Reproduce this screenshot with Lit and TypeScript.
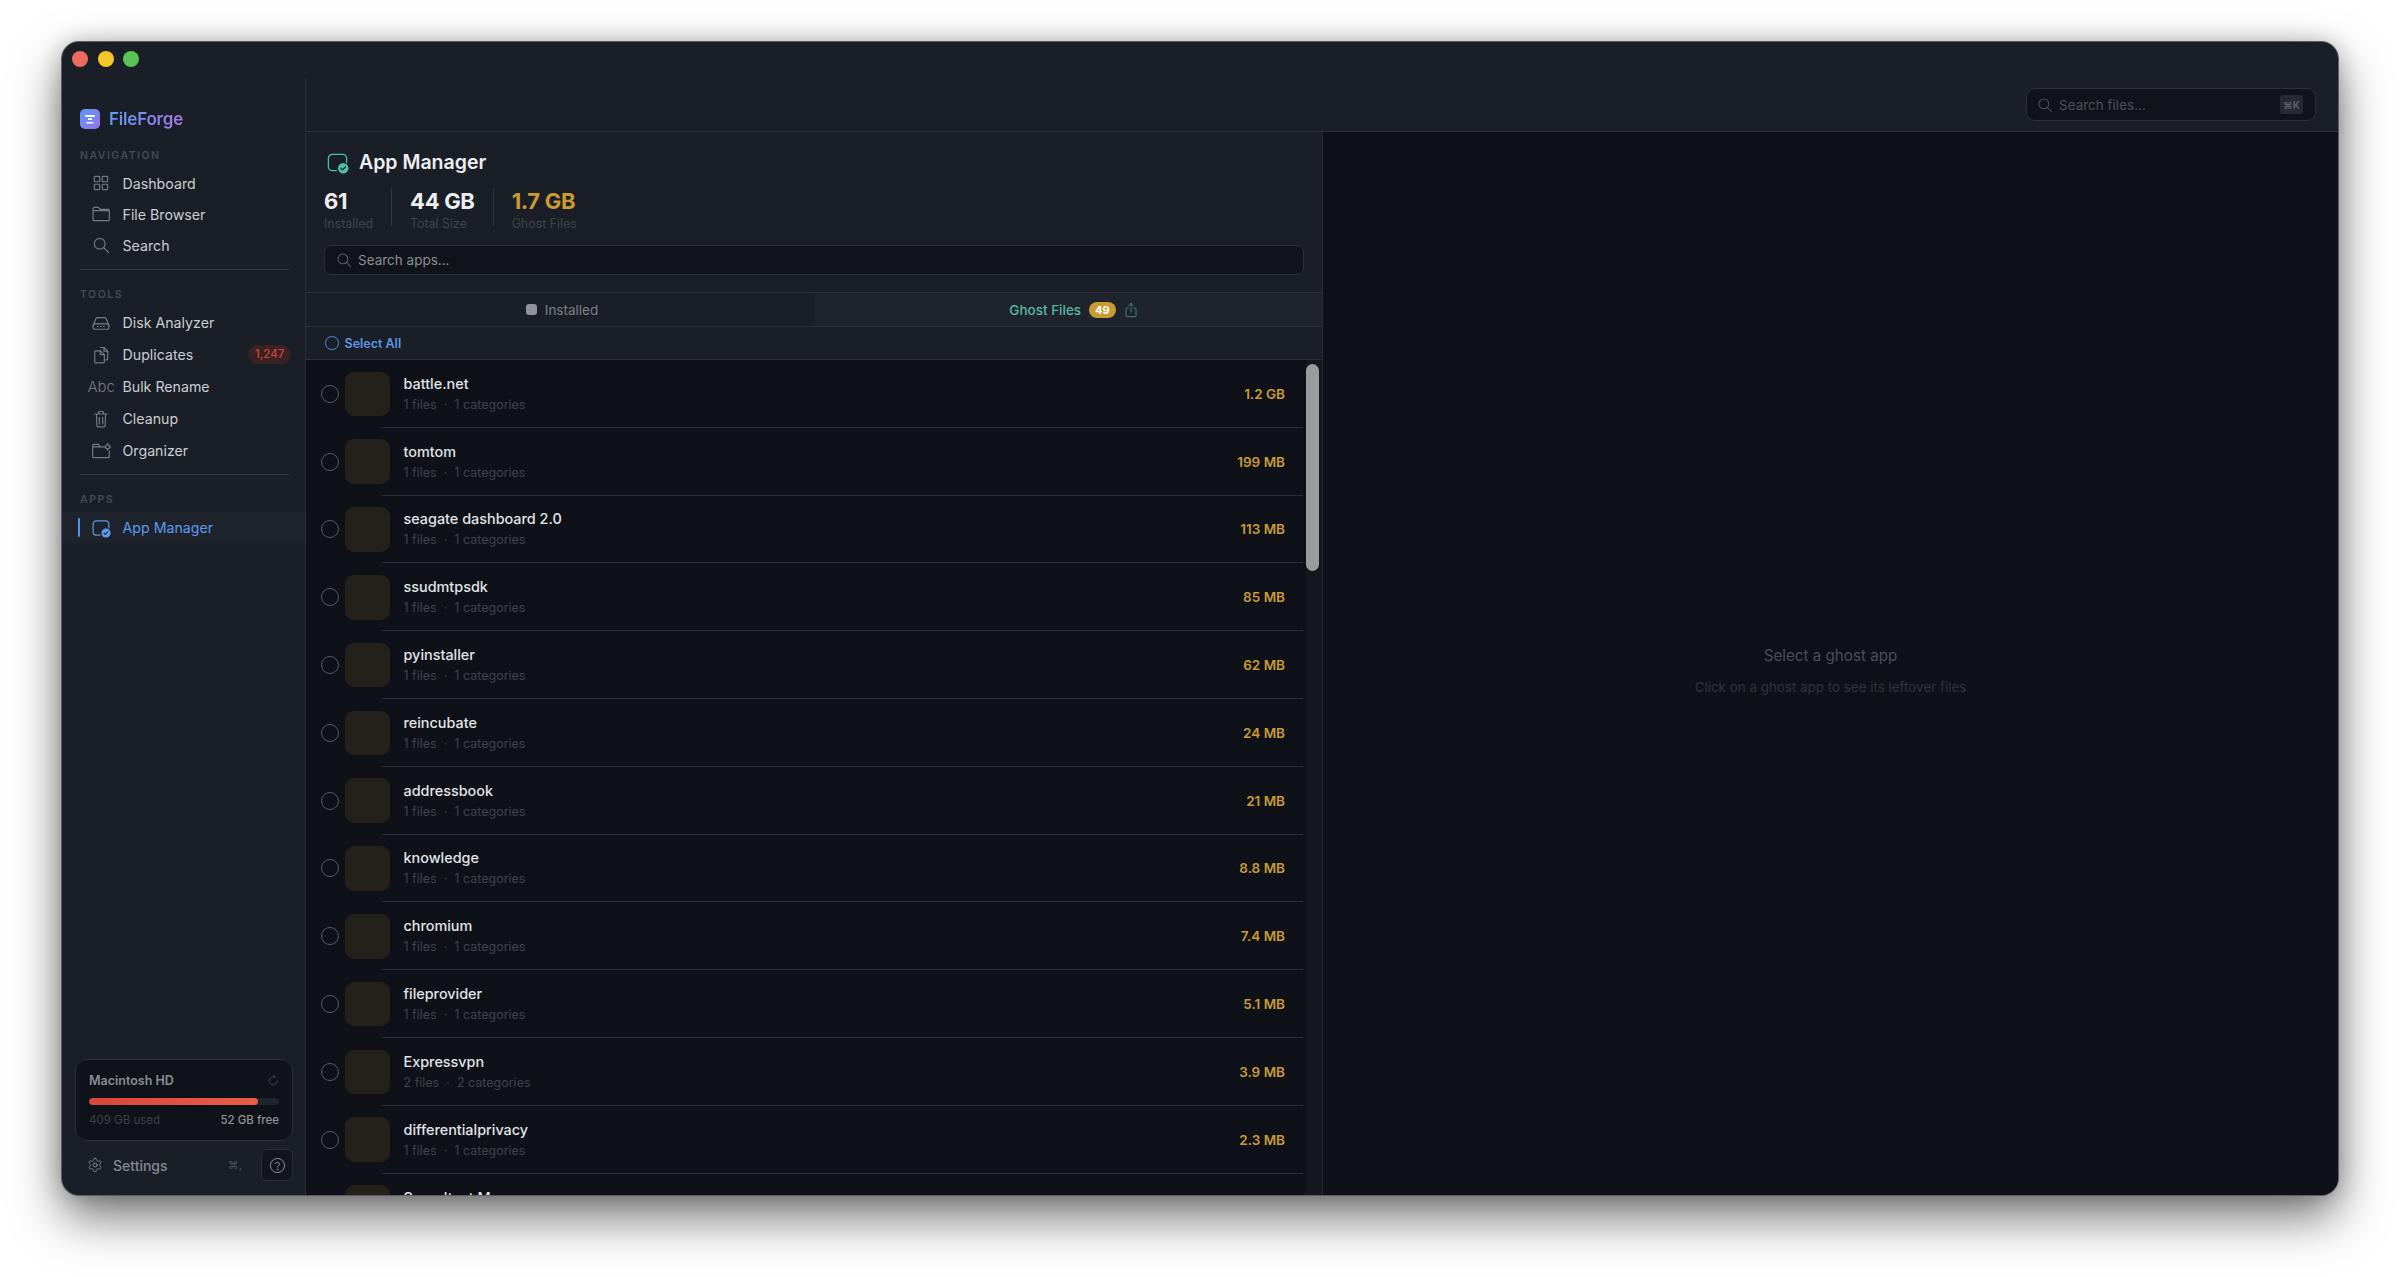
import { LitElement, html, css, svg } from "lit";
import { customElement } from "lit/decorators.js";

const ic = (body: unknown, size = 20, vb = 24) => html`<svg width=${size} height=${size} viewBox="0 0 ${vb} ${vb}" fill="none" stroke="currentColor" stroke-width="1.4" stroke-linecap="round" stroke-linejoin="round">${body}</svg>`;

const icons = {
  grid: svg`<rect x="4" y="4" width="6.5" height="6.5" rx="1"/><rect x="13.5" y="4" width="6.5" height="6.5" rx="1"/><rect x="4" y="13.5" width="6.5" height="6.5" rx="1"/><rect x="13.5" y="13.5" width="6.5" height="6.5" rx="1"/>`,
  folder: svg`<path d="M2.500 8V5.500A1.500 1.500 0 0 1 4 4h5l2 2.500h9.500A1.500 1.500 0 0 1 22 8v10.500a1.500 1.500 0 0 1-1.500 1.500H4a1.500 1.500 0 0 1-1.500-1.500V8H22"/>`,
  search: svg`<circle cx="10.500" cy="10.500" r="6.500"/><path d="M15.500 15.500L21 21"/>`,
  disk: svg`<path d="M2.500 15L6 6.500A2 2 0 0 1 7.800 5.500H16.200A2 2 0 0 1 18 6.500L21.500 15"/><rect x="2.500" y="13" width="19" height="6.500" rx="2.500"/><path d="M8 16.200h1M11.500 16.200h1M15 16.200h1"/>`,
  dup: svg`<path d="M11 3h4.500L20 7.500v9a1.500 1.500 0 0 1-1.500 1.500H16"/><path d="M15.500 3v4.500H20"/><path d="M5.500 7h6L16 11.500v9a1 1 0 0 1-1 1H5.500a1 1 0 0 1-1-1V8a1 1 0 0 1 1-1z"/><path d="M11 7v4.500h5"/>`,
  trash: svg`<path d="M4.500 6h15M9 6V4a1 1 0 0 1 1-1h4a1 1 0 0 1 1 1v2M6.500 6l.6 14a1.500 1.500 0 0 0 1.500 1.500h6.800a1.500 1.500 0 0 0 1.500-1.500l.6-14M10 10v8M14 10v8"/>`,
  org: svg`<path d="M2 7V5.500A1.500 1.500 0 0 1 3.500 4H9l2 3h4M22 12v6.500a1.500 1.500 0 0 1-1.500 1.500h-17A1.500 1.500 0 0 1 2 18.500V7h12"/><circle cx="20" cy="7" r="2.500"/><path d="M20 2.800v1.400M20 9.800v1.400M15.800 7h1.400M22.800 7h1.400"/>`,
  refresh: svg`<path d="M19 12.500A7.500 7.500 0 1 1 12 5h2.500"/><path d="M12 2l3 3-3 3"/>`,
  gear: svg`<circle cx="12" cy="12" r="3"/><path d="M12.220 2h-.44a2 2 0 0 0-2 2v.18a2 2 0 0 1-1 1.730l-.43.25a2 2 0 0 1-2 0l-.15-.08a2 2 0 0 0-2.730.73l-.22.38a2 2 0 0 0 .73 2.730l.15.1a2 2 0 0 1 1 1.720v.51a2 2 0 0 1-1 1.740l-.15.09a2 2 0 0 0-.73 2.730l.22.38a2 2 0 0 0 2.730.73l.15-.08a2 2 0 0 1 2 0l.43.25a2 2 0 0 1 1 1.730V20a2 2 0 0 0 2 2h.44a2 2 0 0 0 2-2v-.18a2 2 0 0 1 1-1.730l.43-.25a2 2 0 0 1 2 0l.15.08a2 2 0 0 0 2.730-.73l.22-.39a2 2 0 0 0-.73-2.730l-.15-.08a2 2 0 0 1-1-1.740v-.5a2 2 0 0 1 1-1.740l.15-.09a2 2 0 0 0 .73-2.730l-.22-.38a2 2 0 0 0-2.730-.73l-.15.08a2 2 0 0 1-2 0l-.43-.25a2 2 0 0 1-1-1.730V4a2 2 0 0 0-2-2z"/>`,
  help: svg`<circle cx="12" cy="12" r="10"/><path d="M9.200 9.300a2.900 2.900 0 0 1 5.600.9c0 1.900-2.800 2.400-2.800 4"/><circle cx="12" cy="17.500" r=".5"/>`,
  share: svg`<path d="M8 9H6a1.500 1.500 0 0 0-1.500 1.500v10A1.500 1.500 0 0 0 6 22h12a1.500 1.500 0 0 0 1.500-1.500v-10A1.500 1.500 0 0 0 18 9h-2M12 15V2M8.500 5.500L12 2l3.500 3.500"/>`,
  app: svg`<path d="M11 20.500H6.500a4 4 0 0 1-4-4v-9a4 4 0 0 1 4-4h11a4 4 0 0 1 4 4v4.500"/><circle cx="18" cy="18" r="5.500" fill="currentColor" stroke="none"/><path d="M15.600 18l1.700 1.700 3-3.200" stroke="var(--check)" stroke-width="1.300"/>`,
};

const rows: [string, string, string][] = [
  ["battle.net", "1.2 GB", "1"], ["tomtom", "199 MB", "1"], ["seagate dashboard 2.0", "113 MB", "1"], ["ssudmtpsdk", "85 MB", "1"],
  ["pyinstaller", "62 MB", "1"], ["reincubate", "24 MB", "1"], ["addressbook", "21 MB", "1"], ["knowledge", "8.8 MB", "1"],
  ["chromium", "7.4 MB", "1"], ["fileprovider", "5.1 MB", "1"], ["Expressvpn", "3.9 MB", "2"], ["differentialprivacy", "2.3 MB", "1"],
];

@customElement("app-root")
export class AppRoot extends LitElement {
  static styles = css`
    :host { display: block; height: 1277px; background: #fff; padding: 42px 62px 0; box-sizing: border-box; font-family: Inter, "Liberation Sans", sans-serif; overflow: hidden; -webkit-font-smoothing: antialiased; }
    * { box-sizing: border-box; }
    .win { width: 2276px; height: 1153px; border-radius: 17px; background: #1a1e26; display: flex; overflow: hidden; box-shadow: 0 0 0 1px #5b5e63, 0 22px 50px rgba(0,0,0,.55), 0 0 22px rgba(0,0,0,.22); }
    .side { width: 244px; flex: none; position: relative; display: flex; flex-direction: column; padding-top: 9px; }
    .side::after { content: ""; position: absolute; right: 0; top: 36px; bottom: 0; width: 1px; background: #2b2f37; }
    .lights { display: flex; gap: 9.700px; padding-left: 10px; height: 18px; }
    .lights i { width: 16px; height: 16px; border-radius: 50%; }
    .brand { display: flex; align-items: center; gap: 9px; padding: 31px 0 0 18px; height: 69px; }
    .logo { width: 20px; height: 20px; border-radius: 5px; background: linear-gradient(135deg,#5a98f5,#9a72ee); display: grid; place-items: center; }
    .brand b { font-size: 17px; font-weight: 600; letter-spacing: -.2px; background: linear-gradient(90deg,#5b9cf2,#a377ea); -webkit-background-clip: text; background-clip: text; color: transparent; }
    .label { font-size: 10.500px; font-weight: 600; letter-spacing: 1.500px; color: #454a54; padding-left: 18px; height: 14px; line-height: 14px; margin-top: 11px; }
    .label.sec { margin-top: 18px; }
    .nav { display: flex; flex-direction: column; margin-top: 5px; }
    .nav.n { margin-top: 4.500px; }
    .item { height: 31.200px; display: flex; align-items: center; position: relative; color: #cbced3; font-size: 14.200px; }
    .item .ic { width: 60.500px; padding-left: 18px; flex: none; color: #777b83; display: flex; justify-content: center; align-items: center; font-size: 15px; font-weight: 300; }
    .nav.t .item { height: 32px; }
    .item.active { background: #1f242c; color: #5b9bee; height: 31px; }
    .item.active .ic { color: #5b9bee; --check: #1f242c; }
    .item.active::before { content: ""; position: absolute; left: 16px; top: 6px; height: 19px; width: 2px; background: #4f93ea; border-radius: 1px; }
    .pill { position: absolute; left: 186px; top: 6px; height: 19px; padding: 0 7px; border-radius: 10px; background: #3a2223; color: #c8473f; font-size: 11.500px; font-weight: 500; line-height: 19px; }
    hr { border: 0; height: 1px; background: #33373f; margin: 7.500px 17px 0 18px; }
    .spacer { flex: 1; }
    .card { margin: 0 13px; height: 82px; border: 1px solid #2b2f37; border-radius: 12px; background: #0f1219; padding: 12px 13px 0; }
    .card-h { display: flex; justify-content: space-between; align-items: center; font-size: 12.500px; font-weight: 600; color: #8a8d94; height: 16px; }
    .card-h span { color: #4c5058; display: flex; margin-right: -1px; }
    .bar { height: 6.500px; border-radius: 4px; background: #1f232b; margin-top: 10px; overflow: hidden; }
    .bar div { height: 100%; border-radius: 4px; background: linear-gradient(90deg,#d9463b,#e85c49); }
    .card-f { display: flex; justify-content: space-between; margin-top: 8px; font-size: 11.500px; color: #3d4149; line-height: 15px; }
    .card-f b { font-weight: 500; color: #8f9298; }
    .set { height: 32px; display: flex; align-items: center; margin: 8px 13px 14px 0; padding-left: 25px; color: #858890; font-size: 14px; font-weight: 500; }
    .set .name { margin-left: 10px; flex: 1; }
    .kb { font-size: 11px; color: #494c54; margin-right: 19px; }
    .q { width: 32px; height: 32px; border: 1px solid #2a2e36; border-radius: 6px; background: #12151c; display: grid; place-items: center; color: #8d9096; }
    .main { flex: 1; min-width: 0; display: flex; flex-direction: column; }
    .top { height: 90px; flex: none; border-bottom: 1px solid #2c3038; display: flex; justify-content: flex-end; align-items: flex-start; padding: 46px 22px 0 0; }
    .tsearch { width: 290px; height: 33px; border-radius: 9px; border: 1px solid #2c3038; background: #10131a; display: flex; align-items: center; padding: 0 12px 0 9px; color: #4c5058; font-size: 13.500px; gap: 5px; }
    .tsearch span { flex: 1; }
    kbd { width: 23px; height: 19px; border-radius: 3px; background: #262a31; color: #5f636b; font: 600 10px Inter, sans-serif; display: grid; place-items: center; }
    .body { flex: 1; min-height: 0; display: flex; }
    .panel { width: 1017px; flex: none; border-right: 1px solid #2a2e36; display: flex; flex-direction: column; min-height: 0; }
    .head { height: 160px; flex: none; padding: 18px 18px 0 18px; }
    .h1 { display: flex; align-items: center; gap: 10px; color: #eceef1; font-size: 19.500px; font-weight: 600; height: 24px; padding-left: 2px; --check: #1a1e26; }
    .h1 svg { color: #4cbfa6; }
    .stats { display: flex; margin-top: 14px; height: 38px; }
    .stat { display: flex; flex-direction: column; padding-right: 18px; margin-right: 18px; border-right: 1px solid #32363e; }
    .stat:last-child { border: 0; }
    .stat b { font-size: 22px; font-weight: 700; color: #eceef1; line-height: 26px; letter-spacing: -.3px; }
    .stat span { font-size: 12.400px; color: #3f444d; line-height: 18px; margin-top: 1px; }
    .asearch { margin-top: 19px; height: 30px; border: 1px solid #2c3038; border-radius: 8px; background: #10131a; display: flex; align-items: center; gap: 5px; padding: 0 0 0 10px; color: #8c8f96; font-size: 13.500px; }
    .asearch svg { color: #5e626a; }
    .tabs { height: 35px; flex: none; display: grid; grid-template-columns: 1fr 1fr; border-top: 1px solid #2c3038; border-bottom: 1px solid #2c3038; font-size: 13.500px; }
    .tabs > div { min-width: 0; display: flex; align-items: center; justify-content: center; }
    .t1 { color: #7c8087; gap: 8px; padding-left: 4px; }
    .t1 i { width: 11px; height: 11px; background: #8f9298; border-radius: 3px; }
    .t2 { background: #1f242c; color: #58b8a8; font-weight: 500; gap: 7px; padding-left: 12px; }
    .t2 em { font-style: normal; background: #c99b33; color: #fff; font-size: 11px; font-weight: 700; padding: 0 6px; height: 16px; line-height: 16px; border-radius: 8px; margin-left: 1px; }
    .t2 svg { color: #3f8a7e; }
    .sel { height: 33px; flex: none; border-bottom: 1px solid #2c3038; display: flex; align-items: center; padding-left: 19px; gap: 6px; color: #5a96e6; font-size: 12.500px; font-weight: 600; }
    .sel i { width: 13.500px; height: 13.500px; border: 1.500px solid #4f8fe0; border-radius: 50%; }
    .list { flex: 1; min-height: 0; background: #0e1118; overflow: hidden; position: relative; }
    .row { height: 67.800px; display: flex; align-items: center; position: relative; padding-left: 15px; }
    .row::after { content: ""; position: absolute; left: 76px; right: 19px; bottom: 0; height: 1px; background: #2b2e35; }
    .radio { width: 18px; height: 18px; border: 1.500px solid #565a61; border-radius: 50%; flex: none; }
    .thumb { width: 44.500px; height: 44.500px; border-radius: 9px; background: #23211a; margin-left: 6px; flex: none; }
    .info { margin-left: 14px; flex: 1; display: flex; flex-direction: column; gap: 5px; }
    .info b { font-size: 14.400px; font-weight: 500; color: #e2e4e8; line-height: 17px; }
    .info span { font-size: 12.500px; color: #3f434b; line-height: 16px; }
    .size { font-size: 13.500px; font-weight: 600; color: #c99b33; margin-right: 37px; }
    .peek { align-items: flex-start; }
    .peek .radio { margin-top: 25px; }
    .peek .thumb { margin-top: 11.600px; }
    .peek .info { padding-top: 15px; }
    .sb { position: absolute; right: 0; top: 0; width: 16px; height: 100%; background: #14171e; }
    .sb div { position: absolute; left: 0; right: 3px; top: 4px; height: 207px; border-radius: 7px; background: #9a9b9d; }
    .detail { flex: 1; background: #0e1118; display: flex; flex-direction: column; align-items: center; padding-top: 514px; }
    .detail b { font-size: 15.200px; font-weight: 400; color: #4a4e57; line-height: 20px; }
    .detail span { font-size: 13.400px; color: #31343c; line-height: 18px; margin-top: 12px; }
  `;

  render() {
    return html`<div class="win">
      <aside class="side">
        <div class="lights"><i style="background:#ee6a5f"></i><i style="background:#f5c52c"></i><i style="background:#5ac254"></i></div>
        <div class="brand"><div class="logo"><svg width="12" height="12" viewBox="0 0 12 12"><path d="M1 2h10l-.6 2H1.600zM4 5.200h4v1.800H4zM2.500 9h7v1.600h-7z" fill="#fff"/></svg></div><b>FileForge</b></div>
        <div class="label">NAVIGATION</div>
        <div class="nav n">
          ${this.item(ic(icons.grid, 20), "Dashboard")}
          ${this.item(ic(icons.folder, 20), "File Browser")}
          ${this.item(ic(icons.search, 20), "Search")}
        </div>
        <hr />
        <div class="label sec">TOOLS</div>
        <div class="nav t">
          ${this.item(ic(icons.disk, 20), "Disk Analyzer")}
          ${this.item(ic(icons.dup, 20), "Duplicates", "1,247")}
          ${this.item(html`Abc`, "Bulk Rename")}
          ${this.item(ic(icons.trash, 20), "Cleanup")}
          ${this.item(ic(icons.org, 20), "Organizer")}
        </div>
        <hr />
        <div class="label sec">APPS</div>
        <div class="nav">
          <div class="item active"><span class="ic">${ic(icons.app, 20)}</span>App Manager</div>
        </div>
        <div class="spacer"></div>
        <div class="card">
          <div class="card-h">Macintosh HD<span>${ic(icons.refresh, 13)}</span></div>
          <div class="bar"><div style="width:88.700%"></div></div>
          <div class="card-f"><span>409 GB used</span><b>52 GB free</b></div>
        </div>
        <div class="set">${ic(icons.gear, 16)}<span class="name">Settings</span><span class="kb">⌘,</span><div class="q">${ic(icons.help, 17)}</div></div>
      </aside>
      <section class="main">
        <div class="top"><div class="tsearch">${ic(icons.search, 18)}<span>Search files...</span><kbd>⌘K</kbd></div></div>
        <div class="body">
          <div class="panel">
            <div class="head">
              <div class="h1">${ic(icons.app, 23)}App Manager</div>
              <div class="stats">
                <div class="stat"><b>61</b><span>Installed</span></div>
                <div class="stat"><b>44 GB</b><span>Total Size</span></div>
                <div class="stat"><b style="color:#c99b33">1.7 GB</b><span>Ghost Files</span></div>
              </div>
              <div class="asearch">${ic(icons.search, 18)}Search apps...</div>
            </div>
            <div class="tabs">
              <div class="t1"><i></i>Installed</div>
              <div class="t2">Ghost Files <em>49</em>${ic(icons.share, 16)}</div>
            </div>
            <div class="sel"><i></i>Select All</div>
            <div class="list">
              ${rows.map(([n, s, c]) => html`<div class="row"><div class="radio"></div><div class="thumb"></div><div class="info"><b>${n}</b><span>${c} files &nbsp;·&nbsp; ${c} categories</span></div><div class="size">${s}</div></div>`)}
              <div class="row peek"><div class="radio"></div><div class="thumb"></div><div class="info"><b>Speedtest Menu</b></div></div>
              <div class="sb"><div></div></div>
            </div>
          </div>
          <div class="detail"><b>Select a ghost app</b><span>Click on a ghost app to see its leftover files</span></div>
        </div>
      </section>
    </div>`;
  }

  item(icon: unknown, text: string, badge?: string) {
    return html`<div class="item"><span class="ic">${icon}</span>${text}${badge ? html`<span class="pill">${badge}</span>` : ""}</div>`;
  }
}
